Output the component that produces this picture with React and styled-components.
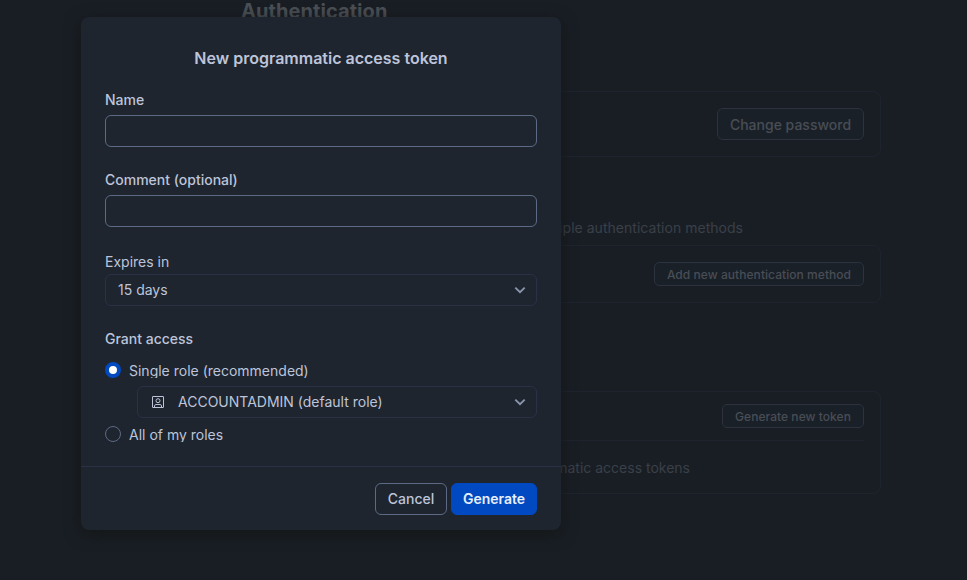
import React, { useState } from "react";
import styled, { createGlobalStyle, css } from "styled-components";

const GlobalStyle = createGlobalStyle`
  *, *::before, *::after { box-sizing: border-box; }
  body {
    margin: 0;
    background: #191e25;
    font-family: Inter, "Liberation Sans", sans-serif;
    font-size: 14px;
    overflow: hidden;
  }
`;

const Screen = styled.div`
  position: relative;
  height: 580px;
  overflow: hidden;
  background: #191e25;
`;

const Settings = styled.main`
  width: 640px;
  margin-left: 241px;
  color: #3a4048;
`;

const PageTitle = styled.h1`
  margin: 0;
  height: 91px;
  font-size: 20px;
  line-height: 22px;
  font-weight: 700;
  letter-spacing: 0.08px;
  color: #4b5056;
`;

const Card = styled.section`
  height: ${(p) => p.$height}px;
  margin-bottom: ${(p) => p.$gap || 0}px;
  padding: 0 16px;
  border: 1px solid #1e242e;
  border-radius: 8px;
`;

const CardRow = styled.div`
  display: flex;
  align-items: center;
  justify-content: flex-end;
  height: ${(p) => p.$height}px;
  border-bottom: ${(p) => (p.$divided ? "1px solid #1e242e" : "none")};
`;

const CardNote = styled.p`
  margin: 0;
  padding: 17px 174px 0 0;
  line-height: 20px;
  text-align: right;
`;

const SectionNote = styled.p`
  margin: 0;
  height: 27px;
  padding-right: 138px;
  line-height: 20px;
  letter-spacing: 0.03px;
  text-align: right;
`;

const PageButton = styled.button`
  width: ${(p) => p.$width}px;
  height: ${(p) => (p.$small ? 24 : 32)}px;
  padding: 0;
  border: 1px solid #2c323e;
  border-radius: ${(p) => (p.$small ? 5 : 6)}px;
  background: #1a2027;
  color: #484d56;
  font: 500 ${(p) => (p.$small ? 12 : 14)}px Inter, sans-serif;
  letter-spacing: ${(p) => (p.$small ? 0.05 : 0)}px;
  white-space: nowrap;
`;

const Dialog = styled.form`
  position: absolute;
  top: 17px;
  left: 81px;
  display: flex;
  flex-direction: column;
  width: 480px;
  height: 513px;
  border-radius: 8px;
  background: #1e252f;
  color: #bdc4d9;
  box-shadow: 0 4px 16px rgba(20, 22, 20, 0.9);
`;

const DialogBody = styled.div`
  flex: 1;
  padding: 31px 24px 0;
`;

const DialogTitle = styled.h2`
  margin: 0 0 22px;
  font-size: 16px;
  line-height: 20px;
  font-weight: 600;
  text-align: center;
`;

const Label = styled.label`
  display: block;
  height: ${(p) => p.$height || 25}px;
  font-weight: ${(p) => (p.$regular ? 400 : 500)};
  line-height: 20px;
`;

const TextInput = styled.input`
  display: block;
  width: 100%;
  height: 32px;
  margin-bottom: ${(p) => p.$gap}px;
  padding: 0 12px;
  border: 1px solid #5d6a85;
  border-radius: 6px;
  outline: none;
  background: transparent;
  color: inherit;
  font: inherit;
`;

const Select = styled.button`
  display: flex;
  align-items: center;
  height: 32px;
  width: ${(p) => (p.$nested ? "400px" : "100%")};
  margin: ${(p) => (p.$nested ? "8px 0 0 32px" : "0 0 23px")};
  padding: 0 10px 0 12px;
  border: 1px solid #2a3147;
  border-radius: 6px;
  background: transparent;
  color: inherit;
  font: 400 14px Inter, sans-serif;
  text-align: left;
`;

const SelectValue = styled.span`
  flex: 1;
  margin-left: ${(p) => (p.$afterIcon ? 12 : 0)}px;
  padding-bottom: 1px;
  line-height: 17px;
`;

const RadioRow = styled.div`
  display: flex;
  align-items: center;
  gap: 8px;
  height: 16px;
  margin-top: ${(p) => p.$top}px;
`;

const Radio = styled.button`
  flex: none;
  width: 16px;
  height: 16px;
  padding: 0;
  border-radius: 50%;
  ${(p) =>
    p.$checked
      ? css`
          border: 4px solid #0049c0;
          background: #fff;
        `
      : css`
          border: 1px solid #5d6a85;
          background: transparent;
        `}
`;

/* The label box is as tall as the radio, so descenders are trimmed. */
const RadioLabel = styled.span`
  height: 16px;
  line-height: 18px;
  overflow: hidden;
`;

const DialogFooter = styled.footer`
  display: flex;
  justify-content: flex-end;
  gap: 4px;
  height: 64px;
  padding: 16px 24px 0;
  border-top: 1px solid #2a3147;
`;

const ActionButton = styled.button`
  width: ${(p) => p.$width}px;
  height: 32px;
  padding: 0 0 1px;
  border: 1px solid ${(p) => (p.$primary ? "#0049c0" : "#5d6a85")};
  border-radius: 6px;
  background: ${(p) => (p.$primary ? "#0049c0" : "transparent")};
  color: ${(p) => (p.$primary ? "#e8effc" : "#bdc4d9")};
  font: ${(p) => (p.$primary ? 600 : 500)} 14px Inter, sans-serif;
`;

const Chevron = () => (
  <svg width="12" height="8" viewBox="0 0 12 8" fill="none">
    <path d="M1.3 1.6 6 6.2l4.7-4.6" stroke="#8a96ad" strokeWidth="1.8" />
  </svg>
);

const RoleIcon = () => (
  <svg width="16" height="16" viewBox="0 0 16 16" fill="none" stroke="#bdc4d9">
    <rect x="2.5" y="2.5" width="11" height="11" rx="0.3" />
    <circle cx="8" cy="6.7" r="2" />
    <path d="M4.5 13v-1.1c0-.8.6-1.4 1.4-1.4h4.2c.8 0 1.4.6 1.4 1.4V13" />
  </svg>
);

export default function App() {
  const [scope, setScope] = useState("single");
  return (
    <Screen>
      <GlobalStyle />
      <Settings>
        <PageTitle>Authentication</PageTitle>
        <Card $height={66} $gap={61}>
          <CardRow $height={64}>
            <PageButton $width={147}>Change password</PageButton>
          </CardRow>
        </Card>
        <SectionNote>multiple authentication methods</SectionNote>
        <Card $height={58} $gap={88}>
          <CardRow $height={56}>
            <PageButton $small $width={210}>Add new authentication method</PageButton>
          </CardRow>
        </Card>
        <Card $height={103}>
          <CardRow $height={49} $divided>
            <PageButton $small $width={142}>Generate new token</PageButton>
          </CardRow>
          <CardNote>programmatic access tokens</CardNote>
        </Card>
      </Settings>

      <Dialog onSubmit={(e) => e.preventDefault()}>
        <DialogBody>
          <DialogTitle>New programmatic access token</DialogTitle>
          <Label htmlFor="name">Name</Label>
          <TextInput id="name" $gap={23} />
          <Label htmlFor="comment">Comment (optional)</Label>
          <TextInput id="comment" $gap={25} />
          <Label as="div" $regular $height={22}>Expires in</Label>
          <Select type="button">
            <SelectValue>15 days</SelectValue>
            <Chevron />
          </Select>
          <Label as="div" $height={20}>Grant access</Label>
          <RadioRow $top={13}>
            <Radio type="button" $checked={scope === "single"} onClick={() => setScope("single")} />
            <RadioLabel>Single role (recommended)</RadioLabel>
          </RadioRow>
          <Select type="button" $nested>
            <RoleIcon />
            <SelectValue $afterIcon>ACCOUNTADMIN (default role)</SelectValue>
            <Chevron />
          </Select>
          <RadioRow $top={8}>
            <Radio type="button" $checked={scope === "all"} onClick={() => setScope("all")} />
            <RadioLabel>All of my roles</RadioLabel>
          </RadioRow>
        </DialogBody>
        <DialogFooter>
          <ActionButton type="button" $width={72}>Cancel</ActionButton>
          <ActionButton $primary $width={86}>Generate</ActionButton>
        </DialogFooter>
      </Dialog>
    </Screen>
  );
}
